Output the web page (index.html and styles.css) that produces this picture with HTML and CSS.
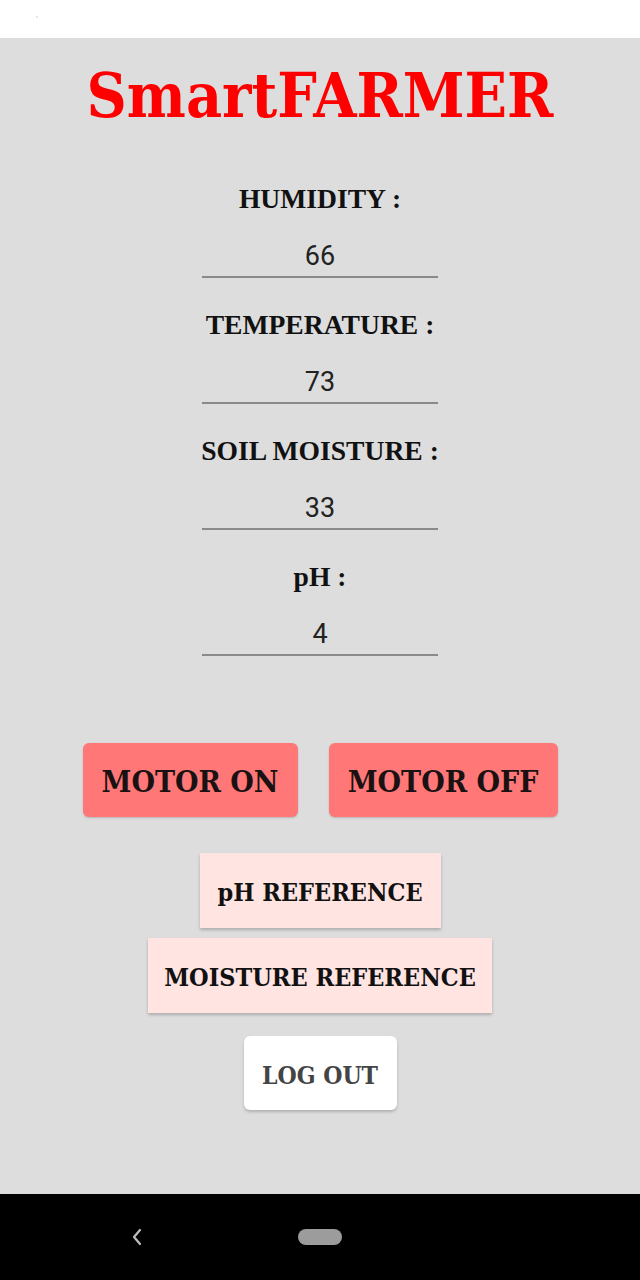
FILE: index.html
```html
<!DOCTYPE html>
<html>
<head>
<meta charset="utf-8">
<title>SmartFARMER</title>
<link rel="stylesheet" href="styles.css">
</head>
<body>
<div class="statusbar"><span class="dot"></span></div>
<main class="screen">
  <h1 class="title">SmartFARMER</h1>
  <section class="fields">
    <div class="field">
      <div class="label">HUMIDITY :</div>
      <div class="value">66</div>
    </div>
    <div class="field">
      <div class="label">TEMPERATURE :</div>
      <div class="value">73</div>
    </div>
    <div class="field">
      <div class="label">SOIL MOISTURE :</div>
      <div class="value">33</div>
    </div>
    <div class="field">
      <div class="label">pH :</div>
      <div class="value">4</div>
    </div>
  </section>
  <div class="motor-row">
    <button class="btn motor motor-on">MOTOR ON</button>
    <button class="btn motor motor-off">MOTOR OFF</button>
  </div>
  <div class="refs">
    <button class="btn ref ref-ph">pH REFERENCE</button>
    <button class="btn ref ref-moist">MOISTURE REFERENCE</button>
  </div>
  <button class="btn logout">LOG OUT</button>
</main>
<nav class="navbar">
  <svg class="back" width="14" height="20" viewBox="0 0 14 20"><path d="M10 3 L4 10 L10 17" fill="none" stroke="#bdbdbd" stroke-width="2.2" stroke-linecap="round" stroke-linejoin="round"/></svg>
  <span class="home"></span>
</nav>
</body>
</html>
```
FILE: styles.css
```css
html, body {
  margin: 0;
  padding: 0;
}
body {
  width: 640px;
  height: 1280px;
  display: flex;
  flex-direction: column;
  overflow: hidden;
  font-family: "DejaVu Serif Condensed", "DejaVu Serif", serif;
}
.statusbar {
  height: 38px;
  background: #ffffff;
  position: relative;
}
.dot {
  position: absolute;
  left: 36px;
  top: 16px;
  width: 2px;
  height: 2px;
  background: #e6e6e6;
}
.screen {
  flex: 1;
  background: #dddddd;
  display: flex;
  flex-direction: column;
  align-items: center;
}
.title {
  margin: 0;
  padding-top: 26px;
  font-family: "DejaVu Serif Condensed", "DejaVu Serif", serif;
  font-weight: bold;
  font-size: 62px;
  line-height: 64px;
  color: #ff0000;
}
.fields {
  margin-top: 54px;
  display: flex;
  flex-direction: column;
  align-items: center;
}
.field {
  width: 236px;
  display: flex;
  flex-direction: column;
  align-items: center;
  margin-bottom: 30px;
}
.label {
  font-family: "Liberation Serif", serif;
  font-weight: bold;
  font-size: 27.6px;
  line-height: 34px;
  color: #111111;
  white-space: nowrap;
}
.value {
  align-self: stretch;
  text-align: center;
  padding-top: 20px;
  font-family: Roboto, sans-serif;
  font-size: 27px;
  line-height: 40px;
  color: #222222;
  border-bottom: 2px solid #8a8a8a;
}
.btn {
  border: none;
  margin: 0;
  padding: 0;
  font-family: "DejaVu Serif Condensed", "DejaVu Serif", serif;
  font-weight: bold;
  cursor: pointer;
}
.motor-row {
  margin-top: 57px;
  display: flex;
  gap: 31px;
}
.motor {
  height: 74px;
  padding-top: 3px;
  background: #ff7777;
  border-radius: 6px;
  color: #1a1212;
  font-size: 30px;
  box-shadow: 0 1px 2px rgba(0, 0, 0, 0.18);
}
.motor-on {
  width: 215px;
}
.motor-off {
  width: 229px;
}
.refs {
  margin-top: 36px;
  display: flex;
  flex-direction: column;
  align-items: center;
  gap: 10px;
}
.ref {
  height: 75px;
  padding-top: 3px;
  background: #ffe4e1;
  color: #111111;
  font-size: 25px;
  box-shadow: 0 2px 3px rgba(0, 0, 0, 0.22);
}
.ref-ph {
  width: 241px;
}
.ref-moist {
  width: 344px;
}
.logout {
  margin-top: 23px;
  width: 153px;
  height: 74px;
  padding-top: 5px;
  background: #ffffff;
  border-radius: 6px;
  color: #444444;
  font-size: 24.5px;
  box-shadow: 0 2px 3px rgba(0, 0, 0, 0.2);
}
.navbar {
  height: 86px;
  background: #000000;
  display: flex;
  align-items: center;
  gap: 154px;
  padding-left: 130px;
}
.home {
  width: 44px;
  height: 16px;
  border-radius: 8px;
  background: #9c9c9c;
}
```
